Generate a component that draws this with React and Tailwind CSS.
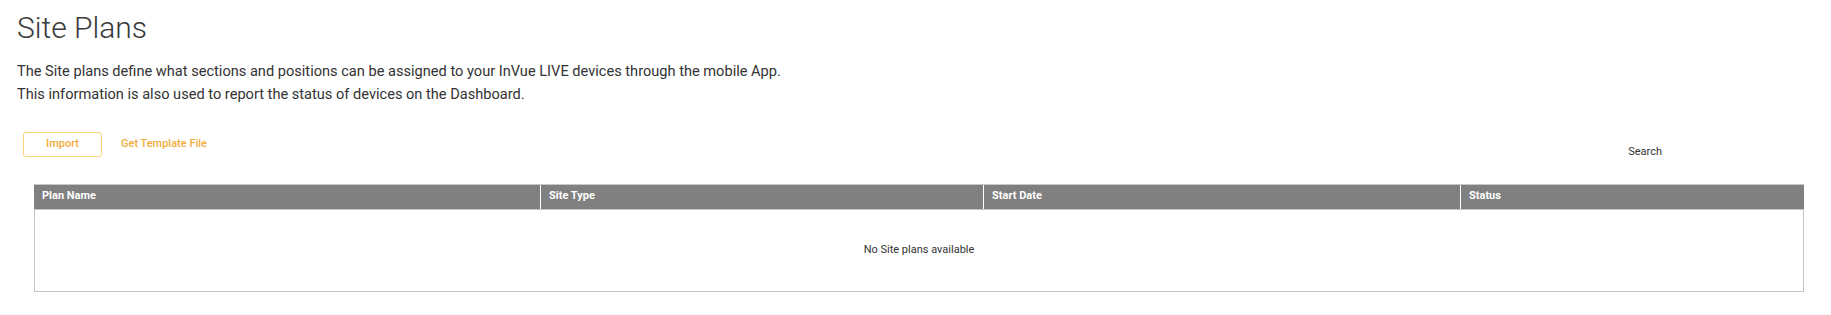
export default function App() {
  const columns = [
    { label: "Plan Name", width: "w-[506px]" },
    { label: "Site Type", width: "w-[443px]" },
    { label: "Start Date", width: "w-[477px]" },
    { label: "Status", width: "flex-1" },
  ];

  return (
    <div className="min-h-screen bg-white px-[17px] pt-[10px] font-['Roboto','Liberation_Sans',sans-serif] text-[#333]">
      <h1 className="text-[30px] font-light leading-[35px] text-[#3a3a3a]">Site Plans</h1>

      <p className="mt-[15px] text-[14.6px] leading-[23px] text-[#333]">
        The Site plans define what sections and positions can be assigned to your InVue LIVE devices through the mobile App.
        <br />
        This information is also used to report the status of devices on the Dashboard.
      </p>

      {/* actions + search */}
      <div className="mt-[26px] flex items-start justify-between">
        <div className="ml-[6px] flex items-center">
          <button
            type="button"
            className="h-[25px] w-[79px] rounded-[3px] border border-[#f8d27c] bg-white text-[11px] font-medium text-[#f2ac3a]"
          >
            Import
          </button>
          <button type="button" className="ml-[19px] text-[11px] font-medium text-[#f2ac3a]">
            Get Template File
          </button>
        </div>
        <div className="mr-[152px] mt-[12px] flex items-center text-[11px] text-[#333]">
          <span>Search</span>
        </div>
      </div>

      {/* table */}
      <div className="ml-[17px] mr-[10px] mt-[23px]">
        <div className="flex h-[25px] border-t border-[#c8c8c8] bg-[#808080]">
          {columns.map((col, i) => (
            <div
              key={col.label}
              className={`${col.width} flex items-center px-[8px] text-[11px] font-bold text-white ${i > 0 ? "border-l border-white" : ""}`}
            >
              {col.label}
            </div>
          ))}
        </div>
        <div className="flex h-[83px] items-center justify-center border border-[#c4c4c4] text-[11px] text-[#333]">
          No Site plans available
        </div>
      </div>
    </div>
  );
}
